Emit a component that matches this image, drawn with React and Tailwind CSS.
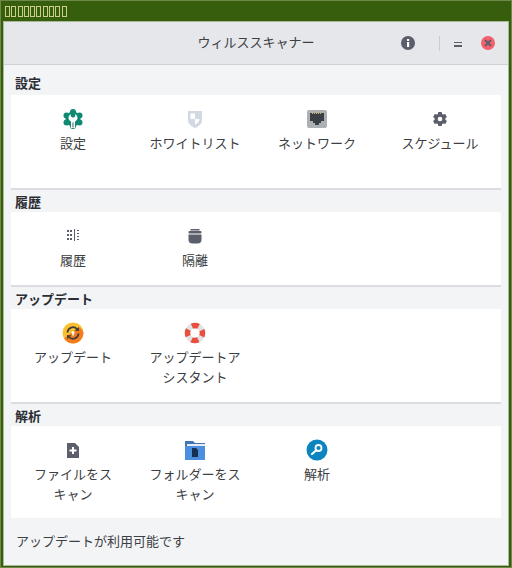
const FONT = "font-['Liberation_Sans','Noto_Sans_CJK_JP',sans-serif]";

function SettingsIcon() {
  return (
    <svg width="24" height="24" viewBox="0 0 24 24">
      <g fill="#0f8a72">
        <circle cx="12" cy="5" r="3" />
        <circle cx="18.500" cy="8.500" r="3" />
        <circle cx="18.500" cy="15.500" r="3" />
        <circle cx="12" cy="19" r="3" />
        <circle cx="5.500" cy="15.500" r="3" />
        <circle cx="5.500" cy="8.500" r="3" />
        <circle cx="12" cy="12" r="7.500" />
      </g>
      <path fill="#fff" d="M9.800 7.200v2.300l2.200 1.300 2.200-1.300V7.200c1.400.6 2.300 2 2.300 3.600 0 1.700-1 3.100-2.500 3.700V21h-4v-6.500c-1.500-.6-2.500-2-2.500-3.700 0-1.600.9-3 2.300-3.600z" />
      <rect x="11.200" y="15.500" width="1.600" height="5" fill="#8d949e" />
    </svg>
  );
}

function ShieldIcon() {
  return (
    <svg width="24" height="24" viewBox="0 0 24 24">
      <path fill="#d3d9e2" d="M5 4h14v9c0 4-3.500 6.500-7 8-3.500-1.500-7-4-7-8z" />
      <path fill="#fff" d="M12 6.500H7.500V12H12zM12 12h4.500c0 2.500-2.200 4.500-4.500 5.700z" />
    </svg>
  );
}

function NetworkIcon() {
  return (
    <svg width="24" height="24" viewBox="0 0 24 24">
      <rect x="2" y="3" width="20" height="18" rx="2" fill="#aeb1b4" />
      <path fill="#3a3f46" d="M5 6h14v8h-3v2h-2v2h-4v-2H8v-2H5z" />
      <path stroke="#e0b84a" strokeWidth="1" strokeDasharray="1 1" d="M7 6.500h10" />
    </svg>
  );
}

function GearIcon() {
  return (
    <svg width="24" height="24" viewBox="0 0 24 24">
      <path
        fill="#5a5f6b"
        fillRule="evenodd"
        d="M10.300 5h3.400l.4 1.900 1.200.7 1.900-.6 1.700 2.900-1.500 1.300v1.600l1.500 1.300-1.700 2.900-1.900-.6-1.200.7-.4 1.900h-3.400l-.4-1.900-1.200-.7-1.900.6-1.700-2.900 1.500-1.300v-1.600L5.100 9.900 6.800 7l1.900.6 1.200-.7zM12 9.700a2.300 2.300 0 1 0 0 4.600 2.300 2.300 0 0 0 0-4.600z"
      />
    </svg>
  );
}

function HistoryIcon() {
  return (
    <svg width="24" height="24" viewBox="0 0 24 24" fill="#5a5f6b">
      <rect x="6" y="6" width="2" height="2" />
      <rect x="9" y="6" width="2" height="2" />
      <rect x="6" y="10" width="2" height="2" />
      <rect x="9" y="10" width="2" height="2" />
      <rect x="6" y="14" width="2" height="2" />
      <rect x="9" y="14" width="2" height="2" />
      <rect x="13" y="5" width="1" height="12" />
      <rect x="16" y="6" width="2" height="1" />
      <rect x="16" y="9" width="2" height="1" />
      <rect x="16" y="12" width="2" height="1" />
      <rect x="16" y="15" width="2" height="1" />
    </svg>
  );
}

function QuarantineIcon() {
  return (
    <svg width="24" height="24" viewBox="0 0 24 24" fill="#5a5f6b">
      <rect x="7.500" y="5" width="9" height="1.500" />
      <rect x="5.500" y="7" width="13" height="2.500" rx="1" />
      <path d="M5.500 10.500h13v5a4 4 0 0 1-4 4h-5a4 4 0 0 1-4-4z" />
    </svg>
  );
}

function UpdateIcon() {
  return (
    <svg width="24" height="24" viewBox="0 0 24 24" fill="none">
      <circle cx="12" cy="12" r="10.500" fill="#fcc02e" />
      <path fill="#f47c20" d="M22.500 12a10.500 10.500 0 0 1-19.500 5.400L18 6a10.500 10.500 0 0 1 4.500 6z" />
      <path stroke="#3f3f3f" strokeWidth="1.800" d="M6.500 11.500a5.500 5.500 0 0 1 9.500-3.500M17.500 12.500a5.500 5.500 0 0 1-9.500 3.500" />
      <path fill="#3f3f3f" d="M13.500 9.500l4.500-3.500v4zM10.500 14.500L6 18v-4z" />
      <circle cx="12" cy="11.500" r="1.500" fill="#fff" />
      <rect x="11.200" y="11.500" width="1.600" height="3" fill="#fff" />
    </svg>
  );
}

function AssistantIcon() {
  return (
    <svg width="24" height="24" viewBox="0 0 24 24" fill="none">
      <circle cx="12" cy="12" r="7.500" stroke="#e2e2e4" strokeWidth="5.500" />
      <circle cx="12" cy="12" r="7.500" stroke="#ea4f3d" strokeWidth="5.500" strokeDasharray="6.800 5" strokeDashoffset="3.400" />
    </svg>
  );
}

function AddFileIcon() {
  return (
    <svg width="24" height="24" viewBox="0 0 24 24">
      <path fill="#5a5f6b" d="M6 5h8l4 4v11H6z" />
      <path fill="#fff" d="M11 9h2v2.500h2.500v2H13V16h-2v-2.500H8.500v-2H11z" />
    </svg>
  );
}

function FolderIcon() {
  return (
    <svg width="24" height="24" viewBox="0 0 24 24">
      <path fill="#3f74b5" d="M2 3h8l2 2h10v6H2z" />
      <rect x="4" y="6" width="18" height="2" fill="#e8ebef" />
      <rect x="2" y="8" width="20" height="14" fill="#4c8fe0" />
      <path fill="#16304f" d="M9 10h4l2 2v7H9z" />
    </svg>
  );
}

function ScanIcon() {
  return (
    <svg width="24" height="24" viewBox="0 0 24 24" fill="none">
      <circle cx="12" cy="12" r="10.500" fill="#0b84c0" />
      <circle cx="13.500" cy="10" r="3" stroke="#fff" strokeWidth="1.800" />
      <path stroke="#fff" strokeWidth="2.200" strokeLinecap="round" d="M11 12.500l-4 3.500" />
    </svg>
  );
}

function Item({ icon, label }) {
  return (
    <div className="flex flex-col items-center pt-[12px]">
      <div className="h-[24px] w-[24px]">{icon}</div>
      <div className="mt-[3px] w-[94px] whitespace-pre-line text-center text-[13px] leading-[20px] text-[#3c4043]">{label}</div>
    </div>
  );
}

function Section({ title, height, items, top }) {
  return (
    <section>
      <h2 className={`${top} px-[4px] text-[13px] font-bold leading-[16px] text-[#2a2d33]`}>{title}</h2>
      <div className={`${height} grid grid-cols-[124px_120px_124px_122px] content-start bg-white`}>
        {items.map((item) => (
          <Item key={item.label} icon={item.icon} label={item.label} />
        ))}
      </div>
    </section>
  );
}

export default function App() {
  return (
    <div className={`${FONT} flex h-[568px] w-[512px] flex-col border border-[#6d8a48] bg-[#365e0c]`}>
      <div className="flex h-[20px] items-center gap-[1.300px] pl-[4px] pt-[1px]">
        {Array.from({ length: 10 }, (_, i) => (
          <span key={i} className="h-[11px] w-[5px] border border-[#c9cf8a]" />
        ))}
      </div>
      <div className="mb-[1px] ml-[2px] mr-[2px] flex min-h-0 flex-1 flex-col border border-[#a9b89a] bg-[#f3f4f6]">
        <header className="relative flex h-[43px] shrink-0 items-center border-b border-[#cfd1d6] bg-[#e6e7ea]">
          <div className="w-full text-center text-[13px] text-[#3c4043]">ウィルススキャナー</div>
          <div className="absolute right-[13px] top-0 flex h-full items-center">
            <svg width="14" height="14" viewBox="0 0 14 14">
              <circle cx="7" cy="7" r="7" fill="#5a5f6b" />
              <rect x="6" y="6" width="2.200" height="5" fill="#fff" />
              <rect x="6" y="3" width="2.200" height="2" fill="#fff" />
            </svg>
            <div className="ml-[24px] h-[15px] w-px bg-[#c9cbd0]" />
            <svg className="ml-[14px] mt-[3px]" width="8" height="6" viewBox="0 0 8 6" fill="#5a5f6b">
              <rect width="8" height="1" />
              <rect y="3" width="8" height="2" />
            </svg>
            <svg className="ml-[19px]" width="14" height="14" viewBox="0 0 14 14">
              <circle cx="7" cy="7" r="7" fill="#f4606c" />
              <path stroke="#5a5f6b" strokeWidth="1.800" d="M4 4l6 6M10 4l-6 6" />
            </svg>
          </div>
        </header>
        <main className="flex flex-1 flex-col px-[7px]">
          <Section
            title="設定"
            top="pt-[11px] pb-[3px]"
            height="h-[93px]"
            items={[
              { label: "設定", icon: <SettingsIcon /> },
              { label: "ホワイトリスト", icon: <ShieldIcon /> },
              { label: "ネットワーク", icon: <NetworkIcon /> },
              { label: "スケジュール", icon: <GearIcon /> },
            ]}
          />
          <div className="h-[2px] bg-[#dcdde0]" />
          <Section
            title="履歴"
            top="pt-[5px] pb-[1px]"
            height="h-[73px]"
            items={[
              { label: "履歴", icon: <HistoryIcon /> },
              { label: "隔離", icon: <QuarantineIcon /> },
            ]}
          />
          <div className="h-[2px] bg-[#dcdde0]" />
          <Section
            title="アップデート"
            top="pt-[5px] pb-[1px]"
            height="h-[93px]"
            items={[
              { label: "アップデート", icon: <UpdateIcon /> },
              { label: "アップデートアシスタント", icon: <AssistantIcon /> },
            ]}
          />
          <div className="h-[2px] bg-[#dcdde0]" />
          <Section
            title="解析"
            top="pt-[5px] pb-[1px]"
            height="h-[92px]"
            items={[
              { label: "ファイルをス\nキャン", icon: <AddFileIcon /> },
              { label: "フォルダーをス\nキャン", icon: <FolderIcon /> },
              { label: "解析", icon: <ScanIcon /> },
            ]}
          />
          <div className="px-[5px] pt-[14px] text-[13px] leading-[20px] text-[#3c4043]">アップデートが利用可能です</div>
        </main>
      </div>
    </div>
  );
}
